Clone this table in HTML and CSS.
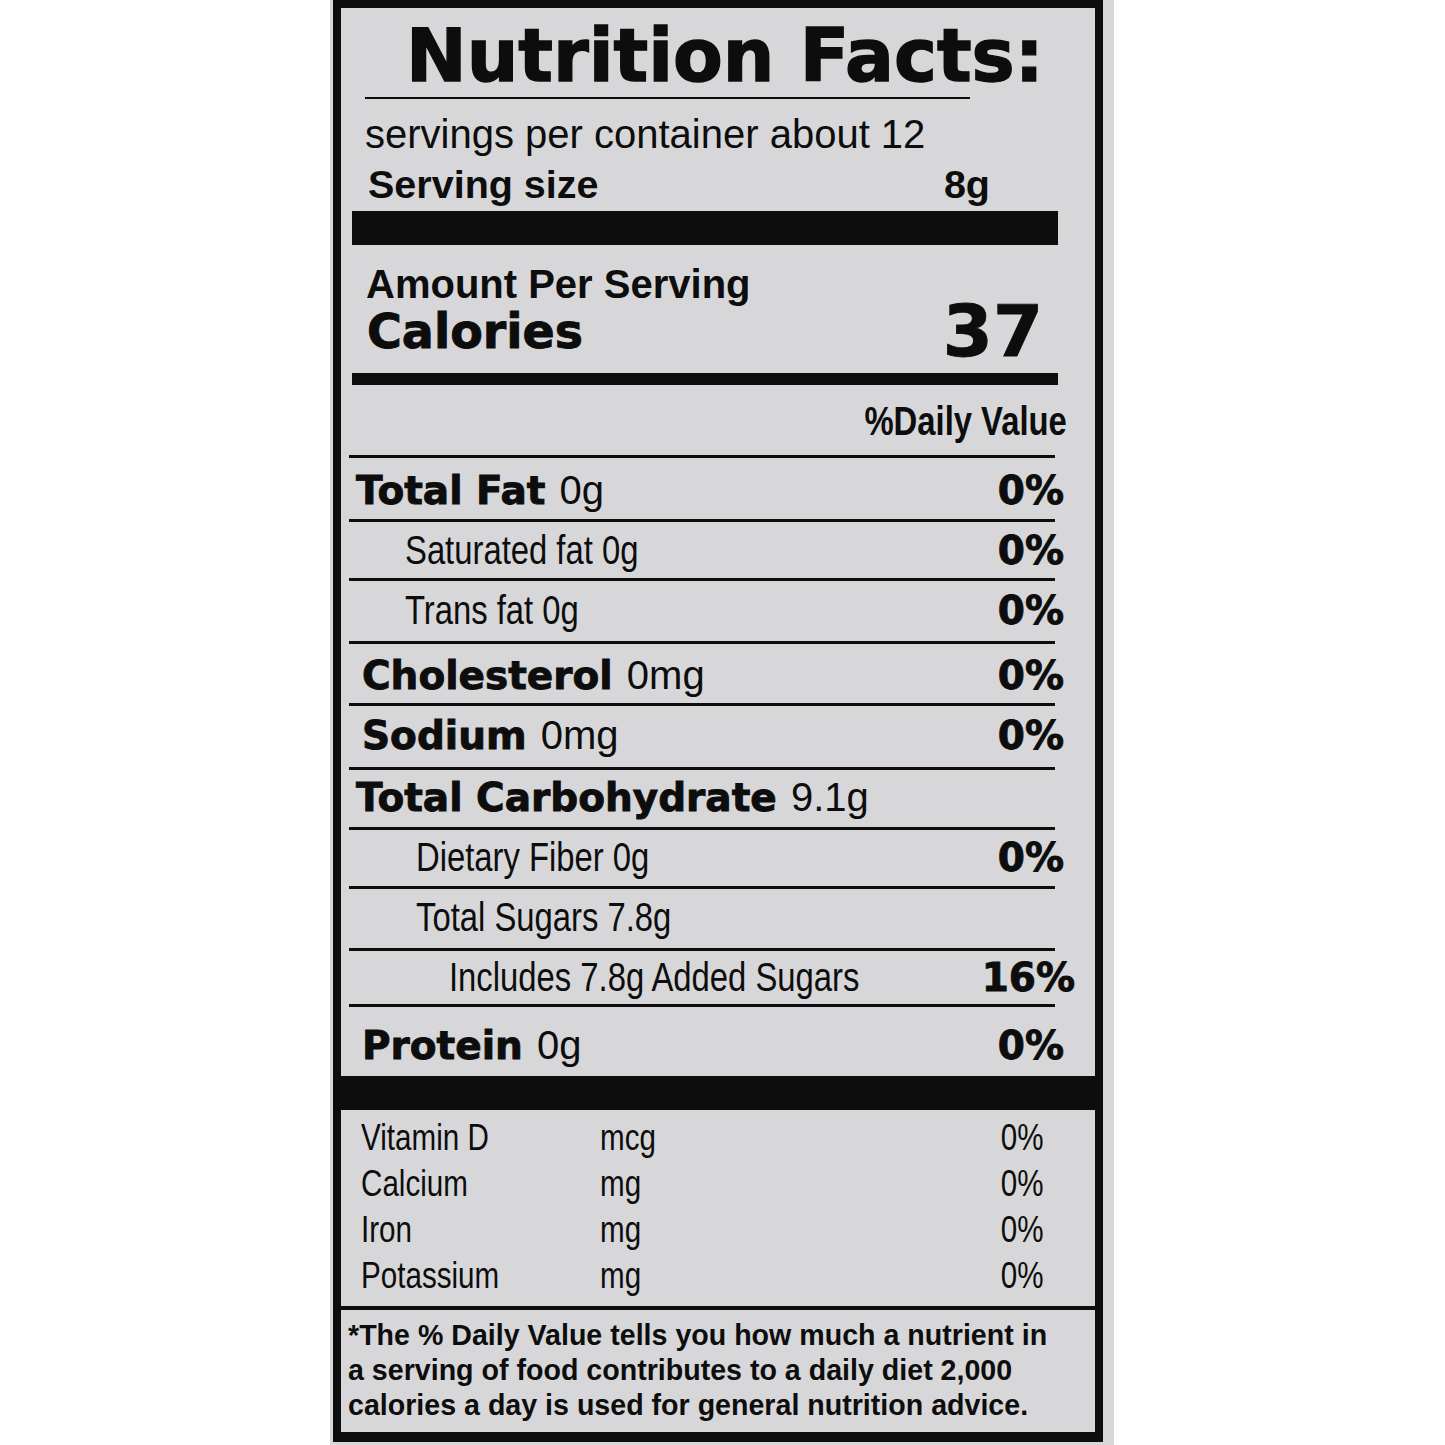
FILE: index.html
```html
<!DOCTYPE html>
<html lang="en">
<head>
<meta charset="utf-8">
<title>Nutrition Facts</title>
<link rel="stylesheet" href="styles.css">
</head>
<body>
<div class="paper">
  <div class="frame">
    <section class="facts">
      <h1 class="title">Nutrition Facts:</h1>
      <div class="title-rule"></div>
      <p class="servings">servings per container about 12</p>
      <div class="serving-size"><span>Serving size</span><span>8g</span></div>
      <div class="bar bar-thick"></div>
      <p class="amount">Amount Per Serving</p>
      <div class="calories"><span class="cal-label">Calories</span><span class="cal-value">37</span></div>
      <div class="bar bar-mid"></div>
      <div class="dv-head"><span class="cond cond-r">%Daily Value</span></div>
      <div class="rows">
        <div class="row ind-a"><span class="nm"><b>Total Fat</b> <span class="amt">0g</span></span><b class="pct">0%</b></div>
        <div class="row ind-c sub"><span class="nm cond">Saturated fat 0g</span><b class="pct">0%</b></div>
        <div class="row ind-c sub"><span class="nm cond">Trans fat 0g</span><b class="pct">0%</b></div>
        <div class="row ind-b"><span class="nm"><b>Cholesterol</b> <span class="amt">0mg</span></span><b class="pct">0%</b></div>
        <div class="row ind-b"><span class="nm"><b>Sodium</b> <span class="amt">0mg</span></span><b class="pct">0%</b></div>
        <div class="row ind-a"><span class="nm"><b>Total Carbohydrate</b> <span class="amt">9.1g</span></span></div>
        <div class="row ind-d sub"><span class="nm cond">Dietary Fiber 0g</span><b class="pct">0%</b></div>
        <div class="row ind-d sub"><span class="nm cond">Total Sugars 7.8g</span></div>
        <div class="row ind-e sub"><span class="nm cond">Includes 7.8g Added Sugars</span><b class="pct pct-wide">16%</b></div>
        <div class="row ind-b last"><span class="nm"><b>Protein</b> <span class="amt">0g</span></span><b class="pct">0%</b></div>
      </div>
    </section>
    <div class="band"></div>
    <section class="vitamins">
      <div class="vrow"><span class="cond">Vitamin D</span><span class="cond">mcg</span><span class="cond cond-r">0%</span></div>
      <div class="vrow"><span class="cond">Calcium</span><span class="cond">mg</span><span class="cond cond-r">0%</span></div>
      <div class="vrow"><span class="cond">Iron</span><span class="cond">mg</span><span class="cond cond-r">0%</span></div>
      <div class="vrow"><span class="cond">Potassium</span><span class="cond">mg</span><span class="cond cond-r">0%</span></div>
    </section>
    <p class="footnote">*The % Daily Value tells you how much a nutrient in<br>a serving of food contributes to a daily diet 2,000<br>calories a day is used for general nutrition advice.</p>
  </div>
</div>
</body>
</html>
```

FILE: styles.css
```css
html, body {
  margin: 0;
  padding: 0;
  background: #ffffff;
}

.paper {
  margin-left: 330px;
  width: 784px;
  box-sizing: border-box;
  padding: 0 11px 3px 3px;
  background: #d7d7d9;
}

.frame {
  border: 8px solid #0d0d0d;
  border-bottom-width: 10px;
  color: #0d0d0d;
  font-family: "Liberation Sans", Arial, sans-serif;
}

/* condensed text: the label's typeface is a narrow grotesque */
.cond {
  display: inline-block;
  transform: scaleX(0.82);
  transform-origin: left center;
}

.cond-r {
  transform-origin: right center;
}

/* extra-heavy weight for the black headings */
.title,
.calories,
.nm b,
.pct {
  -webkit-text-stroke: 0.9px #0d0d0d;
}

.title {
  margin: 0;
  height: 88px;
  box-sizing: border-box;
  padding: 8px 0 0 65px;
  font: 700 72.5px/80px "DejaVu Sans", sans-serif;
  white-space: nowrap;
  -webkit-text-stroke-width: 1.4px;
}

.title-rule {
  margin: 1px 0 0 24px;
  width: 605px;
  height: 2px;
  background: #0d0d0d;
}

.servings {
  margin: 13px 0 0;
  padding-left: 24px;
  font: 400 40px/44px "Liberation Sans", sans-serif;
}

.serving-size {
  margin: 5.5px 0 0 27px;
  width: 622px;
  display: flex;
  justify-content: space-between;
  font: 700 39.5px/44px "Liberation Sans", sans-serif;
}

.bar {
  margin-left: 11px;
  width: 706px;
  background: #0d0d0d;
}

.bar-thick {
  margin-top: 5.5px;
  height: 34px;
}

.bar-mid {
  height: 12px;
}

.amount {
  margin: 17px 0 0;
  padding-left: 25px;
  font: 700 40px/44px "Liberation Sans", sans-serif;
}

.calories {
  display: flex;
  justify-content: space-between;
  align-items: flex-start;
  margin-left: 26px;
  width: 676px;
  height: 67px;
  font-family: "DejaVu Sans", sans-serif;
  font-weight: 700;
}

.cal-label {
  margin-top: 2px;
  font-size: 47.5px;
  line-height: 47px;
}

.cal-value {
  margin-top: -7px;
  font-size: 72px;
  line-height: 64px;
}

.dv-head {
  height: 70px;
  box-sizing: border-box;
  padding: 14px 28px 0 0;
  text-align: right;
  font: 700 40px/44px "Liberation Sans", sans-serif;
}

.rows {
  margin-left: 8px;
  width: 706px;
}

.row {
  display: flex;
  justify-content: space-between;
  align-items: baseline;
  height: 61px;
  box-sizing: border-box;
  border-top: 3px solid #0d0d0d;
  padding-top: 7px;
  line-height: 44px;
  white-space: nowrap;
}

.row:nth-child(1) { height: 64px; padding-top: 9.5px; }
.row:nth-child(2) { height: 59px; padding-top: 5.5px; }
.row:nth-child(3) { height: 63px; padding-top: 6.5px; }
.row:nth-child(4) { height: 62px; padding-top: 8.5px; }
.row:nth-child(5) { height: 64px; padding-top: 6.5px; }
.row:nth-child(6) { height: 60px; padding-top: 4.5px; }
.row:nth-child(7) { height: 59px; padding-top: 4.5px; }
.row:nth-child(8) { height: 62px; padding-top: 5.5px; }
.row:nth-child(9) { height: 56px; padding-top: 3.5px; }
.row.last { height: 72px; padding-top: 15.5px; }

.ind-a { padding-left: 7px; }
.ind-b { padding-left: 13px; }
.ind-c { padding-left: 56px; }
.ind-d { padding-left: 67px; }
.ind-e { padding-left: 100px; }

.nm {
  font: 400 40px/44px "Liberation Sans", sans-serif;
}

.nm b,
.pct {
  font: 700 39px/44px "DejaVu Sans", sans-serif;
}

.amt {
  margin-left: 3px;
  font: 400 40px/44px "Liberation Sans", sans-serif;
}

.pct {
  margin-right: -9px;
}

.pct-wide {
  margin-right: -20px;
}

.band {
  height: 34px;
  background: #0d0d0d;
}

.vitamins {
  padding: 4.5px 52px 7.5px 20px;
  border-bottom: 4px solid #0d0d0d;
  font: 400 37px/46px "Liberation Sans", sans-serif;
}

.vrow {
  display: grid;
  grid-template-columns: 239px 1fr auto;
}

.vrow .cond {
  transform: scaleX(0.8);
}

.vrow .cond-r {
  transform-origin: right center;
}

.footnote {
  margin: 0;
  padding: 7.5px 0 9.5px 7px;
  font: 700 28.6px/35px "Liberation Sans", sans-serif;
  white-space: nowrap;
}
```
